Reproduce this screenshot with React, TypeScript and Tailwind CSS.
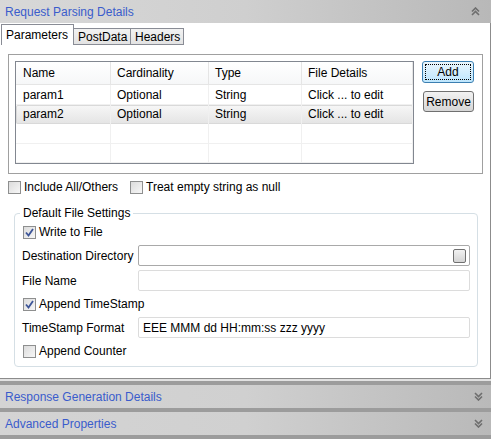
import React from 'react';

const font = { fontFamily: '"Liberation Sans", Arial, sans-serif' };

const Chevrons = ({ up }: { up?: boolean }) => (
  <svg width="9" height="9" viewBox="0 0 9 9" className={up ? '' : 'rotate-180'}>
    <path d="M1 4.5 L4.5 1 L8 4.5" fill="none" stroke="#6e6e6e" strokeWidth="1.6" />
    <path d="M1 8 L4.5 4.5 L8 8" fill="none" stroke="#6e6e6e" strokeWidth="1.6" />
  </svg>
);

const Checkbox = ({ checked }: { checked?: boolean }) => (
  <span className="inline-flex w-[13px] h-[13px] shrink-0 items-center justify-center border border-[#8e8f8f] bg-gradient-to-br from-[#dcdcdc] to-[#f7f7f7]">
    {checked && (
      <svg width="9" height="9" viewBox="0 0 9 9">
        <path d="M1 4.5 L3.5 7.5 L8 1" fill="none" stroke="#3d5598" strokeWidth="1.8" />
      </svg>
    )}
  </span>
);

const CheckItem = ({ label, checked }: { label: string; checked?: boolean }) => (
  <label className="flex items-center gap-[3px] h-[14px]">
    <Checkbox checked={checked} />
    <span>{label}</span>
  </label>
);

const cols = ['w-[95px]', 'w-[98px]', 'w-[93px]', 'flex-1'];
const headers = ['Name', 'Cardinality', 'Type', 'File Details'];
const rows = [
  ['param1', 'Optional', 'String', 'Click ... to edit'],
  ['param2', 'Optional', 'String', 'Click ... to edit'],
  ['', '', '', ''],
  ['', '', '', ''],
];

const ParamTable = () => (
  <div className="w-[399px] h-[103px] border border-[#828790] bg-white flex flex-col overflow-hidden">
    <div className="flex h-[24px] border-b border-[#e5e5e5] bg-gradient-to-b from-white to-[#f6f7f8]">
      {headers.map((h, i) => (
        <div key={h} className={`${cols[i]} ${i === 0 ? 'pl-[7px]' : 'pl-[6px]'} flex items-center border-r border-[#e5e5e5]`}>
          {h}
        </div>
      ))}
    </div>
    {rows.map((r, ri) => (
      <div
        key={ri}
        className={`flex h-[20px] ${ri === 1 ? 'bg-gradient-to-b from-[#f7f7f7] to-[#e4e4e4] shadow-[inset_0_0_0_1px_#d9d9d9] rounded-[2px]' : 'border-b border-[#f0f0f0]'}`}
      >
        {r.map((c, i) => (
          <div key={i} className={`${cols[i]} ${i === 0 ? 'pl-[7px]' : 'pl-[6px]'} flex items-center border-r border-[#f0f0f0]`}>
            {c}
          </div>
        ))}
      </div>
    ))}
  </div>
);

const SectionHeader = ({ title }: { title: string }) => (
  <div className="border-t-4 border-[#9c9c9c]">
    <div className="h-[23px] flex items-center justify-between pl-[5px] pr-[8px] bg-gradient-to-r from-[#d4d4d4] via-[#d0d0d0] to-[#b9b9b9] text-[#3a5ccc]">
      <span>{title}</span>
      <Chevrons />
    </div>
  </div>
);

const Field = ({ label, value, browse }: { label: string; value?: string; browse?: boolean }) => (
  <div className="flex items-center h-[21px]">
    <span className="w-[116px] shrink-0">{label}</span>
    <div
      className={`flex-1 h-[21px] rounded-[2px] border flex items-center justify-between pl-[4px] pr-[3px] ${browse ? 'border-[#a9a9a9]' : 'border-[#dcdcdc]'}`}
    >
      <span>{value}</span>
      {browse && (
        <span className="w-[13px] h-[14px] rounded-[2px] border border-[#707070] bg-gradient-to-b from-[#f2f2f2] to-[#d4d4d4]" />
      )}
    </div>
  </div>
);

export default function App() {
  return (
    <div className="w-[491px] h-[439px] bg-[#9c9c9c] text-[12px] text-black overflow-hidden flex flex-col" style={font}>
      <div className="h-[23px] shrink-0 flex items-center justify-between pl-[5px] pr-[11px] bg-gradient-to-r from-[#d8d8d8] via-[#cfcfcf] to-[#b8b8b8] text-[#3a5ccc]">
        <span>Request Parsing Details</span>
        <Chevrons up />
      </div>

      <div className="h-[356px] shrink-0 bg-white border-r border-b border-[#8c8c8c] flex flex-col">
        <div className="flex items-end h-[21px] mt-[1px] pl-[1px]">
          <div className="w-[73px] h-[21px] border border-b-0 border-[#898c95] bg-white pl-[4px] pt-[1px]">Parameters</div>
          <div className="w-[57px] h-[17px] border border-l-0 border-[#898c95] bg-gradient-to-b from-[#f2f2f2] to-[#e3e3e3] pl-[4px] leading-[16px]">PostData</div>
          <div className="w-[53px] h-[17px] border border-l-0 border-[#898c95] bg-gradient-to-b from-[#f2f2f2] to-[#e3e3e3] pl-[4px] leading-[16px]">Headers</div>
        </div>

        <div className="ml-[8px] mt-[9px] w-[475px] h-[120px] border border-[#a0a0a0] flex gap-[8px] pt-[6px] pl-[6px]">
          <ParamTable />
          <div className="flex flex-col gap-[8px]">
            <button className="w-[52px] h-[22px] rounded-[3px] border border-[#3c7fb1] bg-gradient-to-b from-[#eaf6fd] to-[#bee6fd] p-[2px]">
              <span className="flex items-center justify-center w-full h-full border border-dotted border-black">Add</span>
            </button>
            <button className="w-[51px] h-[21px] rounded-[3px] border border-[#707070] bg-gradient-to-b from-[#f2f2f2] to-[#d6d6d6] ml-[1px]">
              Remove
            </button>
          </div>
        </div>

        <div className="flex items-center gap-[12px] mt-[6px] ml-[8px]">
          <CheckItem label="Include All/Others" />
          <CheckItem label="Treat empty string as null" />
        </div>

        <div className="relative ml-[14px] mt-[19px] w-[464px] h-[154px] border border-[#d5dfe5] rounded-[4px] pl-[7px] pr-[7px] pt-[11px] flex flex-col">
          <span className="absolute -top-[8px] left-[5px] bg-white px-[3px] leading-[14px]">Default File Settings</span>
          <div className="pl-[1px]">
            <CheckItem label="Write to File" checked />
          </div>
          <div className="mt-[6px]">
            <Field label="Destination Directory" browse />
          </div>
          <div className="mt-[4px]">
            <Field label="File Name" />
          </div>
          <div className="mt-[6px] pl-[1px]">
            <CheckItem label="Append TimeStamp" checked />
          </div>
          <div className="mt-[6px]">
            <Field label="TimeStamp Format" value="EEE MMM dd HH:mm:ss zzz yyyy" />
          </div>
          <div className="mt-[6px] pl-[1px]">
            <CheckItem label="Append Counter" />
          </div>
        </div>
      </div>

      <div className="h-[2px] shrink-0 bg-[#e2e2e2]" />
      <SectionHeader title="Response Generation Details" />
      <SectionHeader title="Advanced Properties" />
    </div>
  );
}
